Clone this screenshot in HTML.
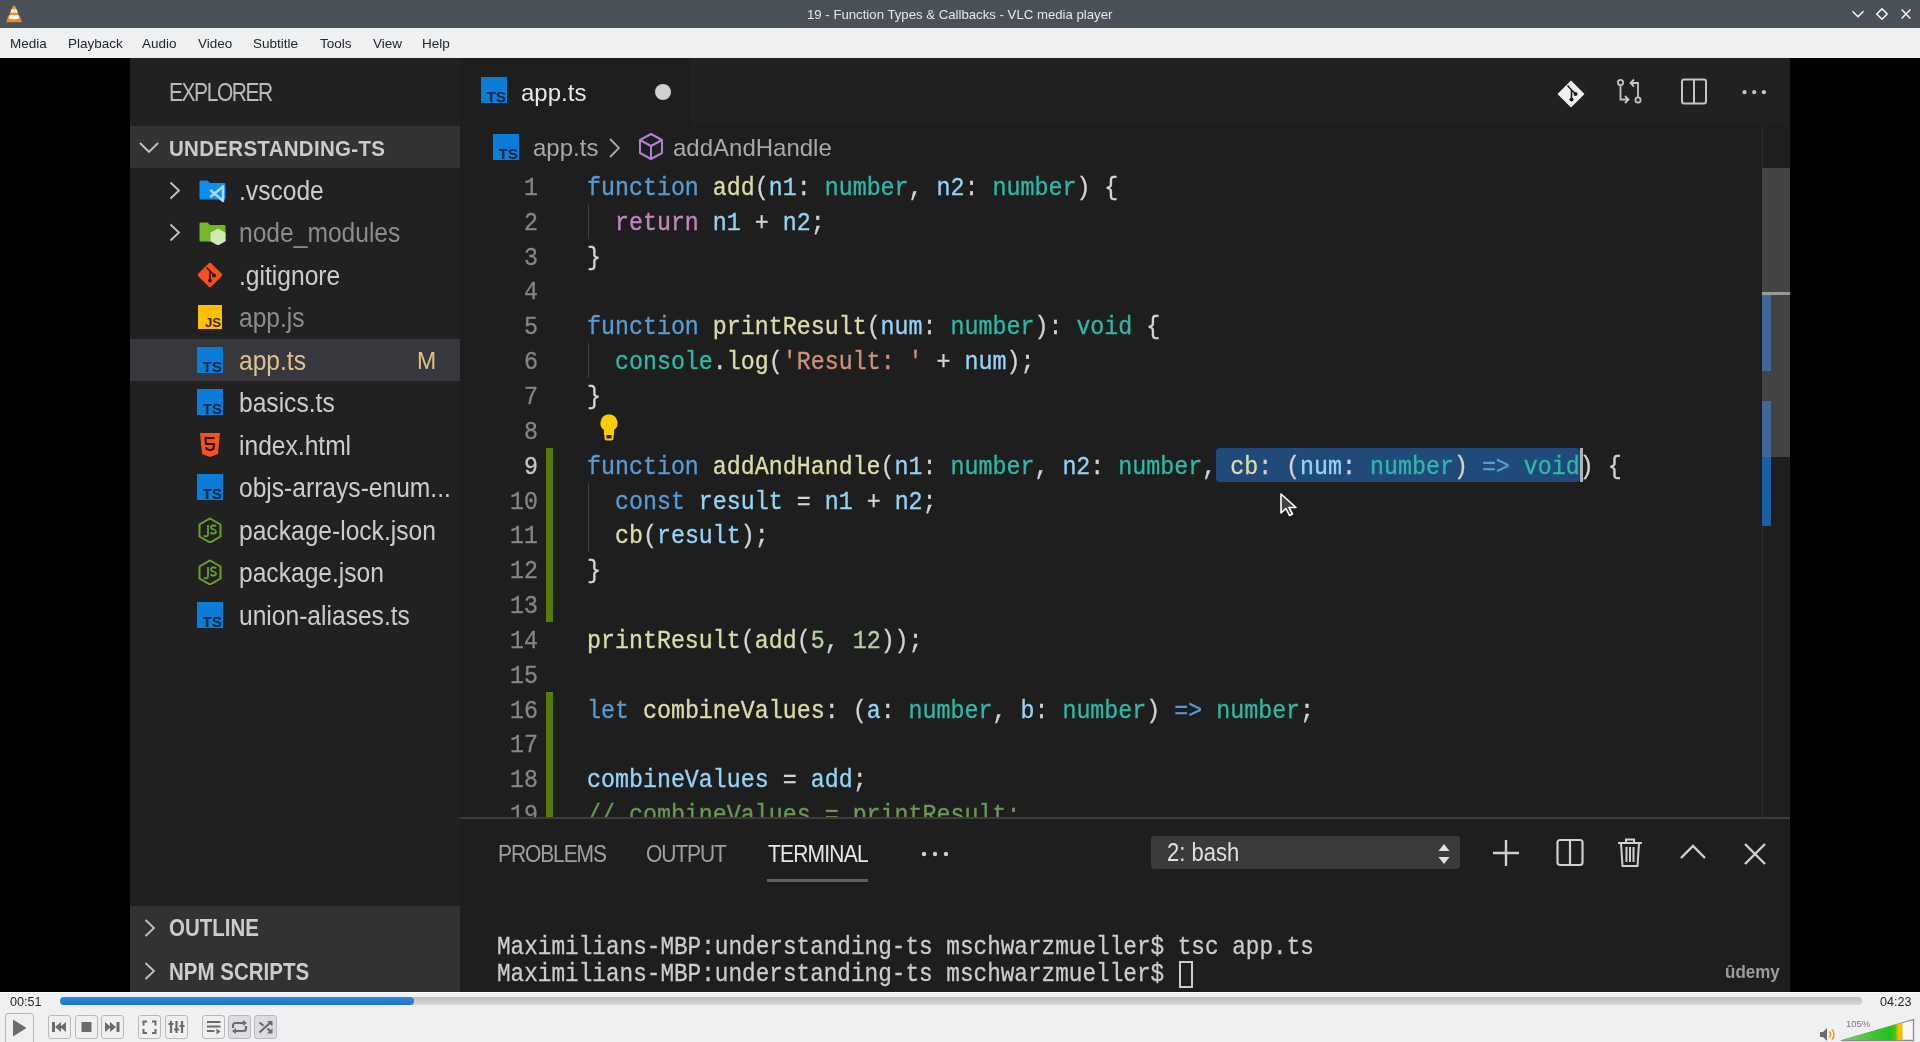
<!DOCTYPE html>
<html><head><meta charset="utf-8">
<style>
*{box-sizing:border-box}
html,body{margin:0;padding:0}
body{width:1920px;height:1042px;position:relative;overflow:hidden;background:#000;font-family:"Liberation Sans",sans-serif}
.a{position:absolute}
.t{position:absolute;white-space:pre;line-height:1;will-change:transform}
.mono{font-family:"Liberation Mono",monospace}
#title{left:0;top:0;width:1920px;height:28px;background:#4b5159}
#menu{left:0;top:28px;width:1920px;height:30px;background:#eff0f1}
.mi{font-size:13.5px;color:#232629;top:36.6px}
#side{left:130px;top:58px;width:330px;height:934px;background:#212121}
#tabs{left:460px;top:58px;width:1330px;height:68px;background:#212121}
#editor{left:460px;top:126px;width:1330px;height:691px;background:#1e1e1e;overflow:hidden}
#panel{left:460px;top:816.5px;width:1330px;height:175.5px;background:#1e1e1e;border-top:2px solid #3c3c3c}
.row{position:absolute;left:130px;width:330px;height:42.5px}
.fn{transform:scaleY(1.125);transform-origin:0 20px;font-size:24.6px;color:#cccccc;left:239px}
.ico{position:absolute;left:197px;width:26px;height:26px}
.ln{-webkit-text-stroke:0.3px currentColor;will-change:transform;transform:scaleY(1.12);transform-origin:0 23px;position:absolute;left:380px;width:158px;text-align:right;font-family:"Liberation Mono",monospace;font-size:23.3px;line-height:34.85px;color:#858585;white-space:pre}
.cl{-webkit-text-stroke:0.3px currentColor;will-change:transform;transform:scaleY(1.12);transform-origin:0 23px;position:absolute;left:587px;font-family:"Liberation Mono",monospace;font-size:23.3px;line-height:34.85px;color:#d4d4d4;white-space:pre}
.k{color:#569cd6}.f{color:#dcdcaa}.v{color:#96d4f6}.ty{color:#2fb8a8}.r{color:#c586c0}.s{color:#ce9178}.n{color:#b5cea8}.c{color:#6a9955}
#ctrl{left:0;top:992px;width:1920px;height:50px;background:#eff0f1;border-top:1px solid #fcfcfc}
.btn{position:absolute;top:1015px;width:23px;height:24px;border:1px solid #b8babc;border-radius:3px;background:#eff0f1}
</style></head><body>
<!-- title bar -->
<div id="title" class="a"></div>
<div class="t" style="left:807px;top:8px;font-size:13.2px;color:#e6e7e8">19 - Function Types &amp; Callbacks - VLC media player</div>
<!-- menu -->
<div id="menu" class="a"></div>
<div class="t mi" style="left:10px">Media</div>
<div class="t mi" style="left:68px">Playback</div>
<div class="t mi" style="left:142px">Audio</div>
<div class="t mi" style="left:198px">Video</div>
<div class="t mi" style="left:253px">Subtitle</div>
<div class="t mi" style="left:320px">Tools</div>
<div class="t mi" style="left:373px">View</div>
<div class="t mi" style="left:422px">Help</div>

<!-- sidebar -->
<div id="side" class="a"></div>
<div class="t" style="transform:scaleY(1.2);transform-origin:0 17px;left:169px;top:82.7px;font-size:21px;letter-spacing:-1.45px;color:#bbbbbb">EXPLORER</div>
<div class="a" style="left:130px;top:126px;width:330px;height:42px;background:#333333"></div>
<div class="t" style="transform:scaleY(1.08);transform-origin:0 16.5px;left:169px;top:138.6px;font-size:20.5px;font-weight:700;color:#cccccc;letter-spacing:0.3px">UNDERSTANDING-TS</div>
<div class="a" style="left:130px;top:338.5px;width:330px;height:42.5px;background:#37373d"></div>

<svg class="a" style="left:169px;top:180.5px;width:12px;height:19px" viewBox="0 0 12 19"><path d="M1.5 1.5l8.5 8-8.5 8" stroke="#c5c5c5" stroke-width="1.8" fill="none"/></svg>
<svg class="a" viewBox="0 0 30 26" style="left:197px;top:176.5px;width:30px;height:26px"><path d="M2.5 3.5h8l2.5 2.5h14c1 0 1.5.5 1.5 1.5V21c0 1-.5 1.5-1.5 1.5h-23c-1 0-1.5-.5-1.5-1.5V5c0-1 .5-1.5 1.5-1.5z" fill="#0f8cf0"/><path d="M26 8.5L19 15l-5-4-2 1.2v7.6l2 1.2 5-4 7 6.5 2.5-1.2V9.7z" fill="#1e1e1e" opacity="0"/><path d="M26 9.5v14.5M26 9.5L14 19.5M26 24L14 13.5" stroke="#a9d8ff" stroke-width="2.5" fill="none" stroke-linecap="round" stroke-linejoin="round"/></svg>
<div class="t fn" style="top:179.7px;color:#cccccc">.vscode</div>
<svg class="a" style="left:169px;top:223.0px;width:12px;height:19px" viewBox="0 0 12 19"><path d="M1.5 1.5l8.5 8-8.5 8" stroke="#c5c5c5" stroke-width="1.8" fill="none"/></svg>
<svg class="a" viewBox="0 0 30 26" style="left:197px;top:219.0px;width:30px;height:26px"><path d="M2.5 3.5h8l2.5 2.5h14c1 0 1.5.5 1.5 1.5V21c0 1-.5 1.5-1.5 1.5h-23c-1 0-1.5-.5-1.5-1.5V5c0-1 .5-1.5 1.5-1.5z" fill="#74b72a"/><path d="M21 9.5l7.5 4.2v8.6L21 26.5l-7.5-4.2v-8.6z" fill="#d2e9b5"/></svg>
<div class="t fn" style="top:222.2px;color:#8c8c8c">node_modules</div>
<svg class="ico" viewBox="0 0 26 26" style="top:261.5px"><path d="M11.3 1.7a2.4 2.4 0 0 1 3.4 0l9.6 9.6a2.4 2.4 0 0 1 0 3.4l-9.6 9.6a2.4 2.4 0 0 1-3.4 0l-9.6-9.6a2.4 2.4 0 0 1 0-3.4z" fill="#f4511e"/><path d="M9.5 5.5l3.5 3.5v9.5M13 9l4 4" stroke="#3a1a10" stroke-width="1.7" fill="none"/><circle cx="13" cy="18.5" r="2" fill="#3a1a10"/><circle cx="17" cy="13.5" r="2" fill="#3a1a10"/></svg>
<div class="t fn" style="top:264.7px;color:#cccccc">.gitignore</div>
<svg class="ico" viewBox="0 0 26 26" style="top:304.0px"><rect x="1" y="1" width="24" height="24" fill="#ffbf00"/><text x="24" y="23" text-anchor="end" font-family="Liberation Sans" font-weight="700" font-size="13" fill="#3a2a00">JS</text></svg>
<div class="t fn" style="top:307.2px;color:#8c8c8c">app.js</div>
<svg class="ico" viewBox="0 0 26 26" style="top:346.5px"><rect x="0" y="0" width="26" height="26" fill="#0a7dd8"/><text x="25" y="24.5" text-anchor="end" font-family="Liberation Sans" font-weight="700" font-size="15" fill="#0b2748">TS</text></svg>
<div class="t fn" style="top:349.7px;color:#e2c08d">app.ts</div>
<svg class="ico" viewBox="0 0 26 26" style="top:389.0px"><rect x="0" y="0" width="26" height="26" fill="#0a7dd8"/><text x="25" y="24.5" text-anchor="end" font-family="Liberation Sans" font-weight="700" font-size="15" fill="#0b2748">TS</text></svg>
<div class="t fn" style="top:392.2px;color:#cccccc">basics.ts</div>
<svg class="ico" viewBox="0 0 26 26" style="top:431.5px"><path d="M3 1h20l-2 21-8 3-8-3z" fill="#f4511e"/><path d="M17.5 6H8.5l.5 6h8l-.5 5-3.5 1.2-3.5-1.2-.2-2" stroke="#2a1208" stroke-width="2" fill="none"/></svg>
<div class="t fn" style="top:434.7px;color:#cccccc">index.html</div>
<svg class="ico" viewBox="0 0 26 26" style="top:474.0px"><rect x="0" y="0" width="26" height="26" fill="#0a7dd8"/><text x="25" y="24.5" text-anchor="end" font-family="Liberation Sans" font-weight="700" font-size="15" fill="#0b2748">TS</text></svg>
<div class="t fn" style="top:477.2px;color:#cccccc">objs-arrays-enum...</div>
<svg class="ico" viewBox="0 0 26 26" style="top:516.5px"><path d="M13 1.5l10.5 6v12L13 25.5 2.5 19.5v-12z" fill="none" stroke="#6aa12a" stroke-width="2"/><path d="M11 8v9.5c0 2-2.5 2.5-4 1" stroke="#6aa12a" stroke-width="1.8" fill="none"/><path d="M19 9.5c-1-1.5-5-1.5-5 1s5 1.5 5 4-4 2.5-5.5 1" stroke="#6aa12a" stroke-width="1.8" fill="none"/></svg>
<div class="t fn" style="top:519.7px;color:#cccccc">package-lock.json</div>
<svg class="ico" viewBox="0 0 26 26" style="top:559.0px"><path d="M13 1.5l10.5 6v12L13 25.5 2.5 19.5v-12z" fill="none" stroke="#6aa12a" stroke-width="2"/><path d="M11 8v9.5c0 2-2.5 2.5-4 1" stroke="#6aa12a" stroke-width="1.8" fill="none"/><path d="M19 9.5c-1-1.5-5-1.5-5 1s5 1.5 5 4-4 2.5-5.5 1" stroke="#6aa12a" stroke-width="1.8" fill="none"/></svg>
<div class="t fn" style="top:562.2px;color:#cccccc">package.json</div>
<svg class="ico" viewBox="0 0 26 26" style="top:601.5px"><rect x="0" y="0" width="26" height="26" fill="#0a7dd8"/><text x="25" y="24.5" text-anchor="end" font-family="Liberation Sans" font-weight="700" font-size="15" fill="#0b2748">TS</text></svg>
<div class="t fn" style="top:604.7px;color:#cccccc">union-aliases.ts</div>
<div class="t" style="transform:scaleY(1.05);transform-origin:0 18.5px;left:416.5px;top:349.5px;font-size:23px;color:#e2c08d">M</div>
<!-- tabs -->
<div id="tabs" class="a"></div>
<div class="a" style="left:460px;top:58px;width:230px;height:68px;background:#1e1e1e"></div>

<!-- editor -->
<div id="editor" class="a"></div>
<svg class="a" style="left:481px;top:77px;width:26px;height:26px" viewBox="0 0 26 26"><rect width="26" height="26" fill="#0a7dd8"/><text x="25" y="24.5" text-anchor="end" font-family="Liberation Sans" font-weight="700" font-size="15" fill="#0b2748">TS</text></svg>
<div class="t" style="left:521px;top:80.9px;font-size:24px;color:#e8e8e8">app.ts</div>
<div class="a" style="left:655px;top:84px;width:16px;height:16px;border-radius:50%;background:#d0d0d0"></div>
<!-- right icons -->
<svg class="a" style="left:1557px;top:80px;width:28px;height:28px" viewBox="0 0 28 28"><path d="M14 1.5L26.5 14 14 26.5 1.5 14z" fill="#f0f0f0" stroke="#f0f0f0" stroke-width="1.5" stroke-linejoin="round"/><path d="M10.5 5.5l4 4.5v9M14.5 10l4 4" stroke="#1e1e1e" stroke-width="1.6" fill="none"/><circle cx="14.5" cy="19.5" r="2" fill="#1e1e1e"/><circle cx="18.5" cy="14" r="2" fill="#1e1e1e"/></svg>
<svg class="a" style="left:1616px;top:78px;width:29px;height:29px" viewBox="0 0 29 29"><circle cx="4.5" cy="4.5" r="2.6" fill="none" stroke="#c5c5c5" stroke-width="1.8"/><path d="M4.5 7.2v14.3h7.5M9 18l3.5 3.5L9 25" stroke="#c5c5c5" stroke-width="1.8" fill="none"/><circle cx="22" cy="22" r="2.6" fill="none" stroke="#c5c5c5" stroke-width="1.8"/><path d="M22 19.3V5h-7.5M18 1.5L14.5 5 18 8.5" stroke="#c5c5c5" stroke-width="1.8" fill="none"/></svg>
<svg class="a" style="left:1680px;top:78px;width:28px;height:28px" viewBox="0 0 28 28"><rect x="2" y="1.5" width="24" height="24" rx="2" fill="none" stroke="#c5c5c5" stroke-width="2"/><path d="M14 1.5v24" stroke="#c5c5c5" stroke-width="2"/></svg>
<svg class="a" style="left:1740px;top:86px;width:30px;height:12px" viewBox="0 0 30 12"><circle cx="4.5" cy="6.2" r="2.1" fill="#c5c5c5"/><circle cx="14.2" cy="6.2" r="2.1" fill="#c5c5c5"/><circle cx="23.9" cy="6.2" r="2.1" fill="#c5c5c5"/></svg>
<!-- breadcrumbs -->
<svg class="a" style="left:493px;top:134px;width:26px;height:26px" viewBox="0 0 26 26"><rect width="26" height="26" fill="#0a7dd8"/><text x="25" y="24.5" text-anchor="end" font-family="Liberation Sans" font-weight="700" font-size="15" fill="#0b2748">TS</text></svg>
<div class="t" style="left:533px;top:135.6px;font-size:24px;color:#a9a9a9">app.ts</div>
<svg class="a" style="left:607px;top:137px;width:16px;height:22px" viewBox="0 0 16 22"><path d="M3 2l9 9-9 9" stroke="#a9a9a9" stroke-width="1.8" fill="none"/></svg>
<svg class="a" style="left:637px;top:132px;width:28px;height:29px" viewBox="0 0 28 29"><path d="M14 2L25 8v13l-11 6-11-6V8z M3 8l11 6 11-6 M14 14v13" stroke="#b180d7" stroke-width="2" fill="none" stroke-linejoin="round"/></svg>
<div class="t" style="left:673px;top:135.6px;font-size:24px;color:#a9a9a9">addAndHandle</div>
<!-- scrollbar -->
<div class="a" style="left:1762px;top:126px;width:1px;height:691px;background:#2a2a2a"></div>
<div class="a" style="left:1762px;top:168px;width:28px;height:289px;background:#434343"></div>
<div class="a" style="left:1762px;top:292px;width:28px;height:3px;background:#9a9a9a"></div>
<div class="a" style="left:1762px;top:295px;width:9px;height:76px;background:#3f6a98"></div>
<div class="a" style="left:1762px;top:401px;width:9px;height:56px;background:#3f6a98"></div>
<div class="a" style="left:1762px;top:457px;width:9px;height:69px;background:#1a5fa6"></div>
<!-- mouse cursor -->
<svg class="a" style="left:1279px;top:492px;width:20px;height:26px" viewBox="0 0 20 26"><path d="M2 2v19l5-4.5 3.5 7 3-1.5-3.5-6.5h7z" fill="#444" stroke="#fff" stroke-width="1.6" stroke-linejoin="round"/></svg>

<div class="a" style="left:1216px;top:447.5px;width:364px;height:34.9px;background:#1f4a7a;border-radius:4px"></div>
<div class="ln" style="top:171.85px;color:#858585">1</div>
<div class="cl" style="top:171.85px"><span class="k">function</span> <span class="f">add</span>(<span class="v">n1</span>: <span class="ty">number</span>, <span class="v">n2</span>: <span class="ty">number</span>) {</div>
<div class="ln" style="top:206.70px;color:#858585">2</div>
<div class="cl" style="top:206.70px">  <span class="r">return</span> <span class="v">n1</span> + <span class="v">n2</span>;</div>
<div class="ln" style="top:241.55px;color:#858585">3</div>
<div class="cl" style="top:241.55px">}</div>
<div class="ln" style="top:276.40px;color:#858585">4</div>
<div class="ln" style="top:311.25px;color:#858585">5</div>
<div class="cl" style="top:311.25px"><span class="k">function</span> <span class="f">printResult</span>(<span class="v">num</span>: <span class="ty">number</span>): <span class="ty">void</span> {</div>
<div class="ln" style="top:346.10px;color:#858585">6</div>
<div class="cl" style="top:346.10px">  <span class="ty">console</span>.<span class="f">log</span>(<span class="s">'Result: '</span> + <span class="v">num</span>);</div>
<div class="ln" style="top:380.95px;color:#858585">7</div>
<div class="cl" style="top:380.95px">}</div>
<div class="ln" style="top:415.80px;color:#858585">8</div>
<div class="ln" style="top:450.65px;color:#c6c6c6">9</div>
<div class="cl" style="top:450.65px"><span class="k">function</span> <span class="f">addAndHandle</span>(<span class="v">n1</span>: <span class="ty">number</span>, <span class="v">n2</span>: <span class="ty">number</span>, <span class="f">cb</span>: (<span class="v">num</span>: <span class="ty">number</span>) <span class="k">=&gt;</span> <span class="ty">void</span>) {</div>
<div class="ln" style="top:485.50px;color:#858585">10</div>
<div class="cl" style="top:485.50px">  <span class="k">const</span> <span class="v">result</span> = <span class="v">n1</span> + <span class="v">n2</span>;</div>
<div class="ln" style="top:520.35px;color:#858585">11</div>
<div class="cl" style="top:520.35px">  <span class="f">cb</span>(<span class="v">result</span>);</div>
<div class="ln" style="top:555.20px;color:#858585">12</div>
<div class="cl" style="top:555.20px">}</div>
<div class="ln" style="top:590.05px;color:#858585">13</div>
<div class="ln" style="top:624.90px;color:#858585">14</div>
<div class="cl" style="top:624.90px"><span class="f">printResult</span>(<span class="f">add</span>(<span class="n">5</span>, <span class="n">12</span>));</div>
<div class="ln" style="top:659.75px;color:#858585">15</div>
<div class="ln" style="top:694.60px;color:#858585">16</div>
<div class="cl" style="top:694.60px"><span class="k">let</span> <span class="f">combineValues</span>: (<span class="v">a</span>: <span class="ty">number</span>, <span class="v">b</span>: <span class="ty">number</span>) <span class="k">=&gt;</span> <span class="ty">number</span>;</div>
<div class="ln" style="top:729.45px;color:#858585">17</div>
<div class="ln" style="top:764.30px;color:#858585">18</div>
<div class="cl" style="top:764.30px"><span class="v">combineValues</span> = <span class="v">add</span>;</div>
<div class="ln" style="top:799.15px;color:#858585">19</div>
<div class="cl" style="top:799.15px"><span class="c">// combineValues = printResult;</span></div>
<div class="a" style="left:588px;top:203.70px;width:1px;height:34.85px;background:#404040"></div>
<div class="a" style="left:588px;top:343.10px;width:1px;height:34.85px;background:#404040"></div>
<div class="a" style="left:588px;top:482.50px;width:1px;height:34.85px;background:#404040"></div>
<div class="a" style="left:588px;top:517.35px;width:1px;height:34.85px;background:#404040"></div>
<div class="a" style="left:546px;top:447.5px;width:7px;height:174.4px;background:#587c0c"></div>
<div class="a" style="left:546px;top:691.5px;width:7px;height:126px;background:#587c0c"></div>
<div class="a" style="left:1580px;top:447.5px;width:3px;height:34.9px;background:#b0b4b8"></div>
<svg class="a" style="left:598px;top:413px;width:22px;height:28px" viewBox="0 0 22 28"><path d="M11 1.5a8.5 8.5 0 0 0-5 15.4V22h10v-5.1A8.5 8.5 0 0 0 11 1.5z" fill="#ffcc00"/><rect x="7.5" y="21" width="7" height="5.5" rx="1" fill="none" stroke="#ffcc00" stroke-width="2"/></svg>

<!-- panel -->
<div id="panel" class="a"></div>
<!-- outline section -->
<div class="a" style="left:130px;top:906px;width:330px;height:86px;background:#323233"></div>
<svg class="a" style="left:143px;top:918px;width:14px;height:20px" viewBox="0 0 14 20"><path d="M2.5 2l8.5 8-8.5 8" stroke="#c5c5c5" stroke-width="1.8" fill="none"/></svg>
<div class="t" style="transform:scaleY(1.15);transform-origin:0 16.5px;left:169px;top:919.3px;font-size:20.5px;font-weight:700;color:#cccccc">OUTLINE</div>
<svg class="a" style="left:143px;top:961px;width:14px;height:20px" viewBox="0 0 14 20"><path d="M2.5 2l8.5 8-8.5 8" stroke="#c5c5c5" stroke-width="1.8" fill="none"/></svg>
<div class="t" style="transform:scaleY(1.15);transform-origin:0 16.5px;left:169px;top:962.6px;font-size:20.5px;font-weight:700;color:#cccccc">NPM SCRIPTS</div>
<!-- understanding chevron -->
<svg class="a" style="left:138px;top:140px;width:22px;height:16px" viewBox="0 0 22 16"><path d="M2 3l9 9 9-9" stroke="#c5c5c5" stroke-width="1.8" fill="none"/></svg>
<!-- panel tabs -->
<div class="t" style="transform:scaleY(1.15);transform-origin:0 17px;left:498px;top:844px;font-size:21px;letter-spacing:-1.1px;color:#a0a0a0">PROBLEMS</div>
<div class="t" style="transform:scaleY(1.15);transform-origin:0 17px;left:646px;top:844px;font-size:21px;letter-spacing:-1.1px;color:#a0a0a0">OUTPUT</div>
<div class="t" style="transform:scaleY(1.15);transform-origin:0 17px;left:768px;top:844px;font-size:21px;letter-spacing:-0.8px;color:#e7e7e7">TERMINAL</div>
<div class="a" style="left:767px;top:879px;width:101px;height:2.5px;background:#5f5f5f"></div>
<svg class="a" style="left:918px;top:846px;width:34px;height:16px" viewBox="0 0 34 16"><circle cx="6" cy="8" r="2.2" fill="#d0d0d0"/><circle cx="17" cy="8" r="2.2" fill="#d0d0d0"/><circle cx="28" cy="8" r="2.2" fill="#d0d0d0"/></svg>
<!-- dropdown -->
<div class="a" style="left:1151px;top:836px;width:309px;height:33px;background:#3a3a3a;border-radius:4px"></div>
<div class="t" style="transform:scaleY(1.15);transform-origin:0 17.5px;left:1167px;top:842.5px;font-size:22px;color:#e0e0e0">2: bash</div>
<svg class="a" style="left:1436px;top:842px;width:16px;height:24px" viewBox="0 0 16 24"><path d="M8 2l5.5 7h-11z M8 22l5.5-7h-11z" fill="#e0e0e0"/></svg>
<!-- panel icons -->
<svg class="a" style="left:1491px;top:838px;width:30px;height:30px" viewBox="0 0 30 30"><path d="M15 2v26M2 15h26" stroke="#d0d0d0" stroke-width="2.4"/></svg>
<svg class="a" style="left:1556px;top:838px;width:28px;height:30px" viewBox="0 0 28 30"><rect x="1.5" y="2" width="25" height="25" rx="2.5" fill="none" stroke="#d0d0d0" stroke-width="2.2"/><path d="M14 2v25" stroke="#d0d0d0" stroke-width="2.2"/></svg>
<svg class="a" style="left:1616px;top:837px;width:28px;height:32px" viewBox="0 0 28 32"><path d="M2 6h24M10 6V2.5h8V6M5 6l1.5 23h15L23 6M10.5 10v15M14 10v15M17.5 10v15" stroke="#d0d0d0" stroke-width="2" fill="none"/></svg>
<svg class="a" style="left:1678px;top:842px;width:30px;height:20px" viewBox="0 0 30 20"><path d="M3 16L15 4l12 12" stroke="#d0d0d0" stroke-width="2.4" fill="none"/></svg>
<svg class="a" style="left:1741px;top:840px;width:28px;height:28px" viewBox="0 0 28 28"><path d="M4 4l20 20M24 4L4 24" stroke="#d0d0d0" stroke-width="2.4"/></svg>
<!-- terminal -->
<div class="t mono" style="-webkit-text-stroke:0.25px currentColor;transform:scaleY(1.13);transform-origin:0 17px;left:497px;top:937px;font-size:22.7px;color:#cccccc">Maximilians-MBP:understanding-ts mschwarzmueller$ tsc app.ts</div>
<div class="t mono" style="-webkit-text-stroke:0.25px currentColor;transform:scaleY(1.13);transform-origin:0 17px;left:497px;top:963.5px;font-size:22.7px;color:#cccccc">Maximilians-MBP:understanding-ts mschwarzmueller$ </div>
<div class="a" style="left:1179px;top:961px;width:14px;height:27px;border:2px solid #cccccc"></div>
<div class="t" style="transform:scaleY(1.1);transform-origin:0 14px;left:1725px;top:964px;font-size:17px;font-weight:700;color:#9c9c9c">ûdemy</div>


<!-- controls -->
<div id="ctrl" class="a"></div>
<!-- title icons -->
<svg class="a" style="left:0;top:0;width:28px;height:28px" viewBox="0 0 28 28"><path d="M12.6 6.6c.5-1.3 2.3-1.3 2.8 0L20 19H8z" fill="#f7921e"/><path d="M8.2 15.6h11.6l2 6.7H6.2z" fill="#f08a10"/><path d="M11.3 9.4h5.4l1 3H10.3z" fill="#fbfbfb"/><path d="M9.6 15.3h8.8l.9 3c-2.3 1.4-8.3 1.4-10.6 0z" fill="#fbfbfb"/></svg>
<svg class="a" style="left:1850px;top:8px;width:16px;height:12px" viewBox="0 0 16 12"><path d="M2.5 3.2L8 8.7l5.5-5.5" stroke="#fff" stroke-width="1.4" fill="none"/></svg>
<svg class="a" style="left:1874px;top:6px;width:16px;height:16px" viewBox="0 0 16 16"><path d="M8 2.8L13.2 8 8 13.2 2.8 8z" stroke="#fff" stroke-width="1.4" fill="none"/></svg>
<svg class="a" style="left:1898px;top:6px;width:16px;height:16px" viewBox="0 0 16 16"><path d="M3.6 3.6l8.8 8.8M12.4 3.6l-8.8 8.8" stroke="#fff" stroke-width="1.4" fill="none"/></svg>
<!-- seek -->
<div class="t" style="left:10px;top:996.2px;font-size:12.6px;color:#232629">00:51</div>
<div class="a" style="left:60px;top:996.5px;width:1802px;height:8.5px;border-radius:4.5px;background:linear-gradient(#bdbec0,#d6d7d8)"></div>
<div class="a" style="left:60px;top:996.5px;width:354px;height:8.5px;border-radius:4.5px;background:linear-gradient(#2a89e2,#2472c8)"></div>
<div class="t" style="left:1880px;top:996.2px;font-size:12.6px;color:#232629">04:23</div>
<!-- buttons -->
<div class="a" style="left:4.5px;top:1012.5px;width:29px;height:32px;border:1px solid #b4b6b8;border-radius:3px;background:#eff0f1"></div>
<svg class="a" style="left:12px;top:1018px;width:16px;height:20px" viewBox="0 0 16 20"><path d="M1 1.5l13.5 8.5L1 18.5z" fill="#6b6b6b"/></svg>
<div class="btn" style="left:48px"></div>
<svg class="a" style="left:48px;top:1015px;width:23px;height:24px" viewBox="0 0 23 24"><path d="M4 7h3v10H4z M7 12l6-5v10z M12 12l6-5v10z" fill="#6b6b6b"/></svg>
<div class="btn" style="left:74.5px"></div>
<svg class="a" style="left:74.5px;top:1015px;width:23px;height:24px" viewBox="0 0 23 24"><rect x="6.5" y="7" width="10" height="10" fill="#6b6b6b"/></svg>
<div class="btn" style="left:100.5px"></div>
<svg class="a" style="left:100.5px;top:1015px;width:23px;height:24px" viewBox="0 0 23 24"><path d="M4 7l6 5-6 5z M9 7l6 5-6 5z M15.5 7h3v10h-3z" fill="#6b6b6b"/></svg>
<div class="btn" style="left:138px"></div>
<svg class="a" style="left:138px;top:1015px;width:23px;height:24px" viewBox="0 0 23 24"><path d="M5.5 10.5V6.5h3.5 M14 6.5h3.5v4 M17.5 14v4H14 M9 18H5.5v-4" stroke="#6b6b6b" stroke-width="2" fill="none"/></svg>
<div class="btn" style="left:164.5px"></div>
<svg class="a" style="left:164.5px;top:1015px;width:23px;height:24px" viewBox="0 0 23 24"><path d="M6 6v12M11.5 6v12M17 6v12" stroke="#6b6b6b" stroke-width="2.2"/><path d="M3.5 9h5M9 14.5h5M14.5 11h5" stroke="#6b6b6b" stroke-width="2.2"/></svg>
<div class="btn" style="left:202px"></div>
<svg class="a" style="left:202px;top:1015px;width:23px;height:24px" viewBox="0 0 23 24"><path d="M5 7h13.5M5 11.5h13.5M5 16h7.5" stroke="#6b6b6b" stroke-width="2"/><path d="M14.5 13.5l4 3-4 3z" fill="#6b6b6b"/></svg>
<div class="btn" style="left:228px;background:#dcdde0"></div>
<svg class="a" style="left:228px;top:1015px;width:23px;height:24px" viewBox="0 0 23 24"><path d="M5 13V10.5c0-1.5 1-2.5 2.5-2.5H16 M18 11v2.5c0 1.5-1 2.5-2.5 2.5H7" stroke="#6b6b6b" stroke-width="2.2" fill="none"/><path d="M15 5l4 3-4 3z M8 13l-4 3 4 3z" fill="#6b6b6b"/></svg>
<div class="btn" style="left:254px;background:#dcdde0"></div>
<svg class="a" style="left:254px;top:1015px;width:23px;height:24px" viewBox="0 0 23 24"><path d="M5.5 17.5L17.5 6.5M5.5 7.5l4 3.2M13.5 13.5l4 4" stroke="#6b6b6b" stroke-width="2.2" fill="none"/><path d="M13 6h5.5v5.5z M18.5 18.5H13l5.5-5.5z" fill="#6b6b6b"/></svg>
<!-- volume -->
<svg class="a" style="left:1819px;top:1027px;width:18px;height:15px" viewBox="0 0 18 15"><path d="M1 5h3l4-4v13l-4-4H1z" fill="#6b6b6b"/><path d="M10.5 4.5c1.5 1.5 1.5 4.5 0 6M13 2.5c2.5 2.5 2.5 7.5 0 10" stroke="#f28c12" stroke-width="1.4" fill="none"/></svg>
<svg class="a" style="left:1840px;top:1018px;width:75px;height:24px" viewBox="0 0 75 24"><defs><linearGradient id="vg" x1="0" x2="1"><stop offset="0" stop-color="#7acb6a"/><stop offset="0.8" stop-color="#21c21a"/><stop offset="0.88" stop-color="#4bc21a"/><stop offset="0.93" stop-color="#f0c000"/></defs><path d="M1.5 22.5L73.5 1.5v21z" fill="#f7f7f7" stroke="#8a8a8a" stroke-width="1.3" stroke-linejoin="round"/><path d="M2 22.2L62.5 4.6v17.6z" fill="url(#vg)"/></svg>
<div class="t" style="left:1846px;top:1019px;font-size:9.5px;color:#7a7a7a">105%</div>

</body></html>
